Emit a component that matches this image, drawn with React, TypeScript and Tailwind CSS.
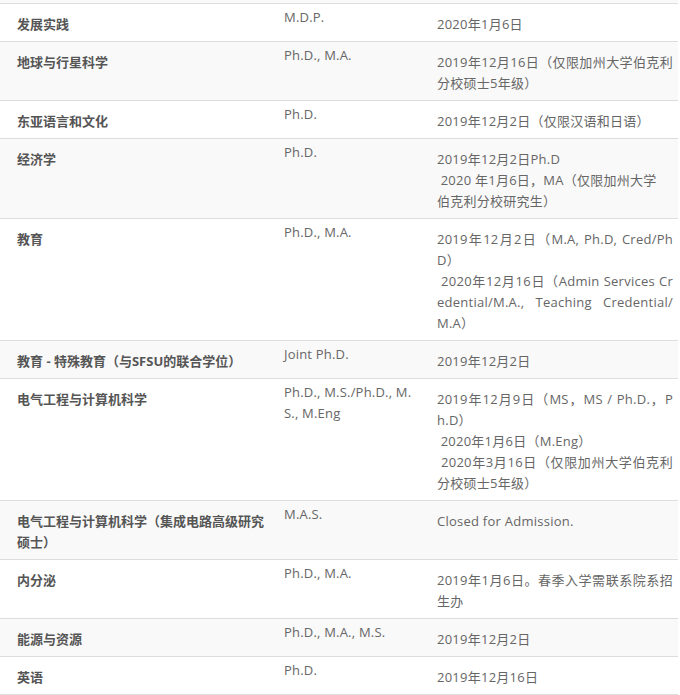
import React from 'react';

type Row = { name: string; degree: string; deadline: string[] };

const rows: Row[] = [
  { name: '发展实践', degree: 'M.D.P.', deadline: ['2020年1月6日'] },
  { name: '地球与行星科学', degree: 'Ph.D., M.A.', deadline: ['2019年12月16日（仅限加州大学伯克利分校硕士5年级）'] },
  { name: '东亚语言和文化', degree: 'Ph.D.', deadline: ['2019年12月2日（仅限汉语和日语）'] },
  {
    name: '经济学',
    degree: 'Ph.D.',
    deadline: ['2019年12月2日Ph.D', '\u00a02020 年1月6日，MA（仅限加州大学\n伯克利分校研究生）'],
  },
  {
    name: '教育',
    degree: 'Ph.D., M.A.',
    deadline: [
      '2019年12月2日（M.A, Ph.D, Cred/PhD）',
      '\u00a02020年12月16日（Admin Services Credential/M.A., Teaching Credential/M.A）',
    ],
  },
  { name: '教育 - 特殊教育（与SFSU的联合学位）', degree: 'Joint Ph.D.', deadline: ['2019年12月2日'] },
  {
    name: '电气工程与计算机科学',
    degree: 'Ph.D., M.S./Ph.D., M.S., M.Eng',
    deadline: [
      '2019年12月9日（MS，MS / Ph.D.，Ph.D）',
      '\u00a02020年1月6日（M.Eng）',
      '\u00a02020年3月16日（仅限加州大学伯克利分校硕士5年级）',
    ],
  },
  { name: '电气工程与计算机科学（集成电路高级研究硕士）', degree: 'M.A.S.', deadline: ['Closed for Admission.'] },
  { name: '内分泌', degree: 'Ph.D., M.A.', deadline: ['2019年1月6日。春季入学需联系院系招生办'] },
  { name: '能源与资源', degree: 'Ph.D., M.A., M.S.', deadline: ['2019年12月2日'] },
  { name: '英语', degree: 'Ph.D.', deadline: ['2019年12月16日'] },
];

export default function App() {
  return (
    <div
      className="w-[680px] bg-white text-[13px] leading-[21px] text-[#555]"
      style={{ fontFamily: '"Open Sans", "Noto Sans CJK SC", sans-serif' }}
    >
      <div className="w-[678px]">
        {/* tail of the previous row */}
        <div className="h-[4px] bg-[#f9f9f9] border-b border-[#dddddd]" />
        {rows.map((r, i) => (
          <div
            key={r.name}
            className={`flex border-b border-[#dddddd] ${i % 2 === 1 ? 'bg-[#f9f9f9]' : 'bg-white'}`}
          >
            <div className="w-[267px] shrink-0 pl-[17px] pr-0 pt-[10px] pb-[6px] font-bold text-[#555]">
              {r.name}
            </div>
            <div className="w-[153px] shrink-0 pl-[17px] pr-[6px] pt-[3px] pb-[6px] break-all text-[#666] tracking-[0.2px]">
              {r.degree}
            </div>
            <div className="flex-1 pl-[17px] pr-[5px] pt-[10px] pb-[6px] break-all text-justify text-[#666] tracking-[0.25px]">
              {r.deadline.map((d, j) => (
                <div key={j} className="whitespace-pre-line">
                  {d}
                </div>
              ))}
            </div>
          </div>
        ))}
      </div>
    </div>
  );
}
